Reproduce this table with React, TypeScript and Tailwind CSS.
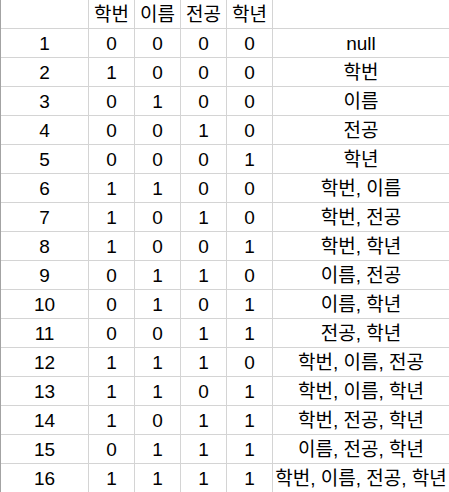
const headers = ["", "학번", "이름", "전공", "학년", ""];

const fields = ["학번", "이름", "전공", "학년"];

// order used in the sheet: by number of fields set
const order = [
  [0, 0, 0, 0],
  [1, 0, 0, 0],
  [0, 1, 0, 0],
  [0, 0, 1, 0],
  [0, 0, 0, 1],
  [1, 1, 0, 0],
  [1, 0, 1, 0],
  [1, 0, 0, 1],
  [0, 1, 1, 0],
  [0, 1, 0, 1],
  [0, 0, 1, 1],
  [1, 1, 1, 0],
  [1, 1, 0, 1],
  [1, 0, 1, 1],
  [0, 1, 1, 1],
  [1, 1, 1, 1],
];

function label(bits: number[]) {
  const names = fields.filter((_, i) => bits[i] === 1);
  return names.length ? names.join(", ") : "null";
}

const cell = "flex h-[29px] items-center justify-center border-r border-b border-[#d4d4d4] whitespace-nowrap";

export default function App() {
  return (
    <div
      className="h-[492px] w-[449px] overflow-hidden bg-white text-[19px] text-black"
      style={{ fontFamily: '"Liberation Sans", "Noto Sans CJK KR", sans-serif' }}
    >
      <div className="grid grid-cols-[88px_46px_46px_46px_46px_177px] border-l border-[#a3a3a3] leading-none">
        {headers.map((h, i) => (
          <div key={"h" + i} className={cell}>
            {h}
          </div>
        ))}
        {order.map((bits, r) => (
          <div key={r} className="contents">
            <div className={cell}>{r + 1}</div>
            {bits.map((b, j) => (
              <div key={j} className={cell}>
                {b}
              </div>
            ))}
            <div className={cell}>{label(bits)}</div>
          </div>
        ))}
      </div>
    </div>
  );
}
